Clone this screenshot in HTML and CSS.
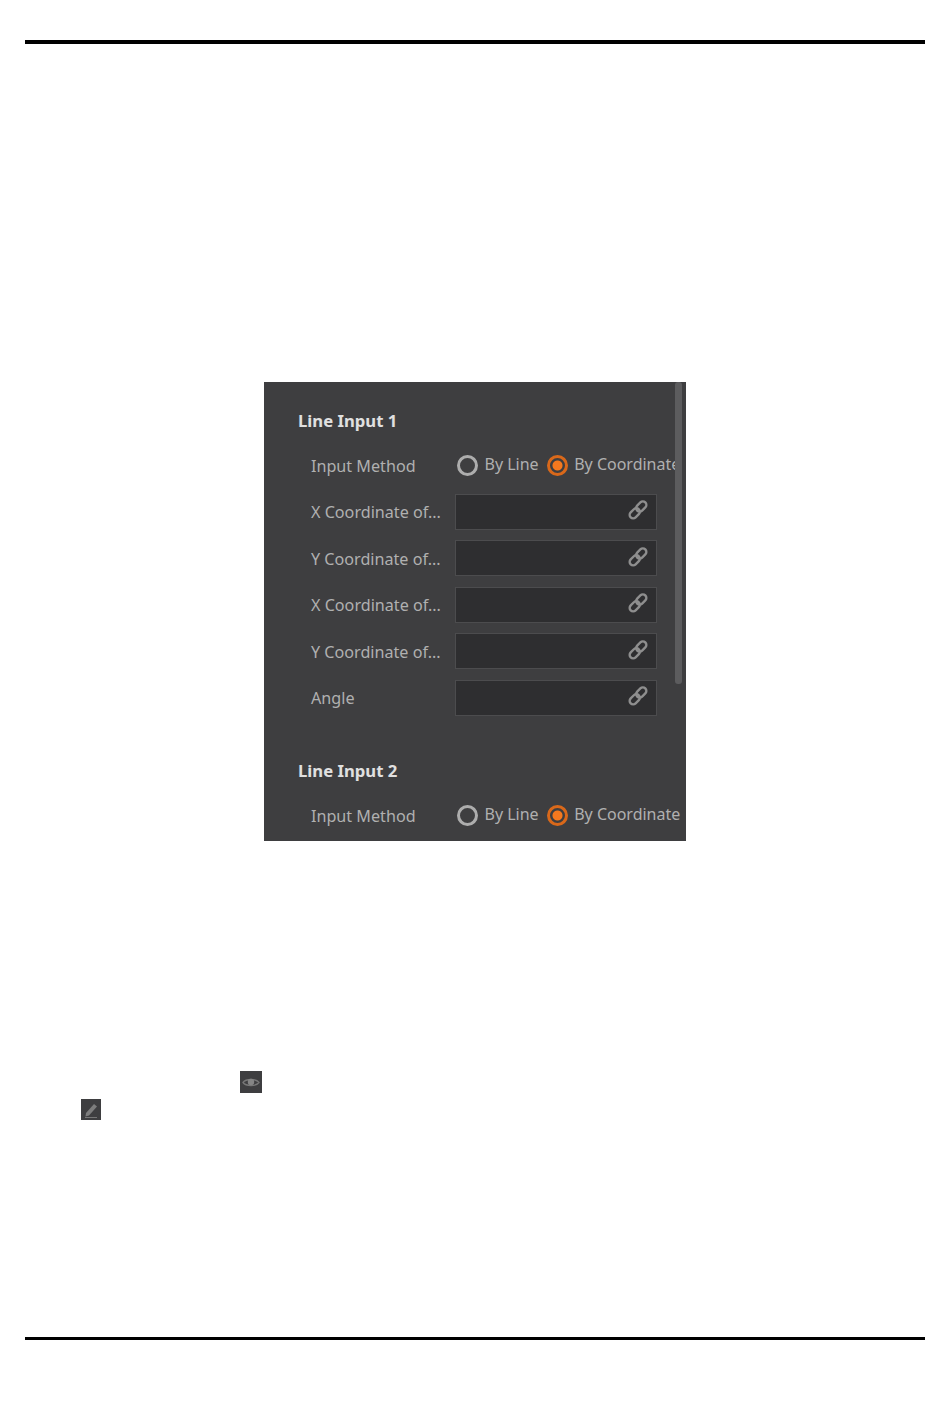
FILE: index.html
```html
<!DOCTYPE html>
<html lang="en">
<head>
    <meta charset="UTF-8">
    <title>Line Input</title>
    <link rel="stylesheet" href="styles.css">
</head>
<body>
    <svg width="0" height="0" class="defs">
        <symbol id="link" viewBox="0 0 20 20">
            <g fill="none" stroke="currentColor" stroke-width="2.4">
                <rect x="7.500" y="3" width="11.500" height="7" rx="3.500" transform="rotate(-45 13.250 6.500)"/>
                <rect x="1" y="9.800" width="11.500" height="7" rx="3.500" transform="rotate(-45 6.750 13.300)"/>
            </g>
        </symbol>
    </svg>

    <div class="page">
        <div class="rule rule-top"></div>

        <div class="panel">
            <div class="scrollbar"></div>

            <h3 class="group-title">Line Input 1</h3>
            <div class="row row-radio row-clip">
                <span class="row-label">Input Method</span>
                <div class="radios">
                    <span class="radio"></span><span class="radio-text">By Line</span>
                    <span class="radio radio-on"></span><span class="radio-text">By Coordinate</span>
                </div>
            </div>
            <div class="row">
                <span class="row-label">X Coordinate of...</span>
                <div class="field"><svg class="link-icon"><use href="#link"/></svg></div>
            </div>
            <div class="row">
                <span class="row-label">Y Coordinate of...</span>
                <div class="field"><svg class="link-icon"><use href="#link"/></svg></div>
            </div>
            <div class="row">
                <span class="row-label">X Coordinate of...</span>
                <div class="field"><svg class="link-icon"><use href="#link"/></svg></div>
            </div>
            <div class="row">
                <span class="row-label">Y Coordinate of...</span>
                <div class="field"><svg class="link-icon"><use href="#link"/></svg></div>
            </div>
            <div class="row">
                <span class="row-label row-label-short">Angle</span>
                <div class="field"><svg class="link-icon"><use href="#link"/></svg></div>
            </div>

            <h3 class="group-title group-second">Line Input 2</h3>
            <div class="row row-radio">
                <span class="row-label">Input Method</span>
                <div class="radios">
                    <span class="radio"></span><span class="radio-text">By Line</span>
                    <span class="radio radio-on"></span><span class="radio-text">By Coordinate</span>
                </div>
            </div>
        </div>

        <div class="note-icons">
            <div class="tool tool-eye">
                <svg viewBox="0 0 22 22" width="22" height="22">
                    <path d="M3 11.500c3-4 13-4 16 0c-3 4-13 4-16 0z" fill="none" stroke="#777" stroke-width="1.300"/>
                    <circle cx="11" cy="11" r="3.200" fill="#858585"/>
                </svg>
            </div>
            <div class="tool tool-pen">
                <svg viewBox="0 0 20 21" width="20" height="21">
                    <path d="M5 14l8-9l3 2.500l-8 9l-3.500 1z" fill="#7d7d7d"/>
                    <path d="M4 18.500h12" stroke="#777" stroke-width="1"/>
                </svg>
            </div>
        </div>

        <div class="rule rule-bottom"></div>
    </div>
</body>
</html>
```

FILE: styles.css
```css
html, body {
    margin: 0;
    background: #fff;
}
.defs { display: block; height: 0; }
.page {
    display: flex;
    flex-direction: column;
    height: 1408px;
    padding: 40px 25px 0;
    box-sizing: border-box;
    font-family: "Noto Sans", "Open Sans", sans-serif;
}
.rule {
    height: 3px;
    background: #000;
    flex: none;
}
.rule-top { height: 4px; }
.panel {
    position: relative;
    width: 422px;
    height: 459px;
    margin: 338px 0 0 239px;
    padding: 26px 0 0 34px;
    box-sizing: border-box;
    overflow: hidden;
    background: #3e3e40;
    flex: none;
}
.scrollbar {
    position: absolute;
    top: 0;
    left: 411px;
    width: 7px;
    height: 302px;
    border-radius: 3px;
    background: #5c5c5e;
}
.group-title {
    margin: 0;
    height: 26px;
    line-height: 26px;
    font-size: 16.700px;
    font-weight: 700;
    color: #e0e0e0;
}
.group-second { margin-top: 42.600px; }
.row {
    display: flex;
    align-items: center;
    height: 36px;
    margin-top: 10.500px;
    padding-left: 13px;
}
.row-radio {
    margin-top: 13.400px;
}
.row-clip .radios {
    width: 220px;
    overflow: hidden;
}
.row-label {
    width: 144px;
    flex: none;
    padding-top: 1px;
    font-size: 16.150px;
    color: #b0b0b0;
    white-space: nowrap;
}
.row-label-short { padding-top: 0; }
.radios {
    display: flex;
    align-items: center;
    flex: none;
    margin-left: 2px;
    white-space: nowrap;
}
.radio {
    width: 21px;
    height: 21px;
    flex: none;
    box-sizing: border-box;
    border: 3px solid #adadad;
    border-radius: 50%;
}
.radio-on {
    border-color: #d9681a;
    background: radial-gradient(circle, #f5781e 0 4.500px, #3e3e40 5.500px);
}
.radio-text {
    margin: -3px 8px 0 6.500px;
    font-size: 16px;
    color: #b0b0b0;
}
.field {
    display: flex;
    align-items: center;
    justify-content: flex-end;
    width: 202px;
    height: 36px;
    padding-right: 8px;
    box-sizing: border-box;
    background: #2e2e30;
    border: 1px solid #4c4c4e;
    color: #8e8e8e;
}
.link-icon {
    width: 20px;
    height: 20px;
    margin-top: -3px;
}
.note-icons {
    display: flex;
    flex-direction: column;
    margin-top: 230px;
    height: 49px;
    flex: none;
}
.tool {
    background: #3e3e40;
    line-height: 0;
}
.tool-eye {
    width: 22px;
    height: 22px;
    margin-left: 215px;
}
.tool-pen {
    width: 20px;
    height: 21px;
    margin: 6px 0 0 56px;
}
.rule-bottom { margin-top: 217px; }
```
